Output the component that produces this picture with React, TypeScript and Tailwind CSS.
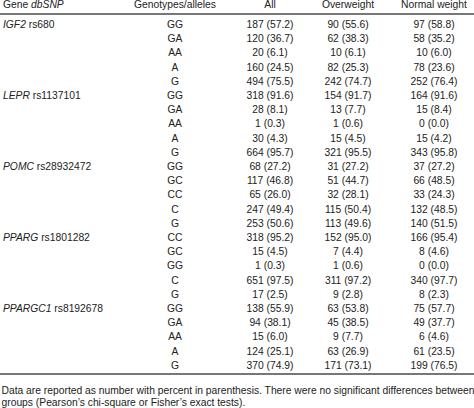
import React from "react";

interface IGenoRow {
    geno: string;
    all: string;
    over: string;
    normal: string;
}

interface IGeneGroup {
    gene: string;
    rs: string;
    rows: IGenoRow[];
}

const groups: IGeneGroup[] = [
    {
        gene: "IGF2",
        rs: "rs680",
        rows: [
            {geno: "GG", all: "187 (57.2)", over: "90 (55.6)", normal: "97 (58.8)"},
            {geno: "GA", all: "120 (36.7)", over: "62 (38.3)", normal: "58 (35.2)"},
            {geno: "AA", all: "20 (6.1)", over: "10 (6.1)", normal: "10 (6.0)"},
            {geno: "A", all: "160 (24.5)", over: "82 (25.3)", normal: "78 (23.6)"},
            {geno: "G", all: "494 (75.5)", over: "242 (74.7)", normal: "252 (76.4)"},
        ],
    },
    {
        gene: "LEPR",
        rs: "rs1137101",
        rows: [
            {geno: "GG", all: "318 (91.6)", over: "154 (91.7)", normal: "164 (91.6)"},
            {geno: "GA", all: "28 (8.1)", over: "13 (7.7)", normal: "15 (8.4)"},
            {geno: "AA", all: "1 (0.3)", over: "1 (0.6)", normal: "0 (0.0)"},
            {geno: "A", all: "30 (4.3)", over: "15 (4.5)", normal: "15 (4.2)"},
            {geno: "G", all: "664 (95.7)", over: "321 (95.5)", normal: "343 (95.8)"},
        ],
    },
    {
        gene: "POMC",
        rs: "rs28932472",
        rows: [
            {geno: "GG", all: "68 (27.2)", over: "31 (27.2)", normal: "37 (27.2)"},
            {geno: "GC", all: "117 (46.8)", over: "51 (44.7)", normal: "66 (48.5)"},
            {geno: "CC", all: "65 (26.0)", over: "32 (28.1)", normal: "33 (24.3)"},
            {geno: "C", all: "247 (49.4)", over: "115 (50.4)", normal: "132 (48.5)"},
            {geno: "G", all: "253 (50.6)", over: "113 (49.6)", normal: "140 (51.5)"},
        ],
    },
    {
        gene: "PPARG",
        rs: "rs1801282",
        rows: [
            {geno: "CC", all: "318 (95.2)", over: "152 (95.0)", normal: "166 (95.4)"},
            {geno: "GC", all: "15 (4.5)", over: "7 (4.4)", normal: "8 (4.6)"},
            {geno: "GG", all: "1 (0.3)", over: "1 (0.6)", normal: "0 (0.0)"},
            {geno: "C", all: "651 (97.5)", over: "311 (97.2)", normal: "340 (97.7)"},
            {geno: "G", all: "17 (2.5)", over: "9 (2.8)", normal: "8 (2.3)"},
        ],
    },
    {
        gene: "PPARGC1",
        rs: "rs8192678",
        rows: [
            {geno: "GG", all: "138 (55.9)", over: "63 (53.8)", normal: "75 (57.7)"},
            {geno: "GA", all: "94 (38.1)", over: "45 (38.5)", normal: "49 (37.7)"},
            {geno: "AA", all: "15 (6.0)", over: "9 (7.7)", normal: "6 (4.6)"},
            {geno: "A", all: "124 (25.1)", over: "63 (26.9)", normal: "61 (23.5)"},
            {geno: "G", all: "370 (74.9)", over: "171 (73.1)", normal: "199 (76.5)"},
        ],
    },
];

const cols = "grid grid-cols-[112px_126px_64px_92px_80px]";

const App: React.FC = () => {
    return (
        <main className="w-[474px] h-[408px] overflow-hidden bg-white text-[#222] text-[10.3px] font-['Liberation_Sans',Arial,sans-serif]">
            {/* header */}
            <div className={`${cols} h-[15px] leading-[9px] border-b-2 border-[#777] whitespace-nowrap`}>
                <div className="pl-[3px]">
                    Gene <i>dbSNP</i>
                </div>
                <div className="text-center">Genotypes/alleles</div>
                <div className="text-center">All</div>
                <div className="text-center">Overweight</div>
                <div className="text-center">Normal weight</div>
            </div>

            {/* body */}
            <div className="pt-[3px] border-b-2 border-[#777] leading-[14.2px] whitespace-nowrap">
                {groups.map((g) =>
                    g.rows.map((r, i) => (
                        <div key={g.gene + r.geno + i} className={cols}>
                            <div className="pl-[3px]">
                                {i === 0 && (
                                    <>
                                        <i>{g.gene}</i> {g.rs}
                                    </>
                                )}
                            </div>
                            <div className="text-center">{r.geno}</div>
                            <div className="text-center">{r.all}</div>
                            <div className="text-center">{r.over}</div>
                            <div className="text-center">{r.normal}</div>
                        </div>
                    ))
                )}
            </div>

            {/* footnote */}
            <p className="mt-[10px] pl-[1.5px] leading-[12.3px] whitespace-nowrap">
                Data are reported as number with percent in parenthesis. There were no significant differences between
                <br/>
                groups (Pearson’s chi-square or Fisher’s exact tests).
            </p>
        </main>
    );
};

export default App;
